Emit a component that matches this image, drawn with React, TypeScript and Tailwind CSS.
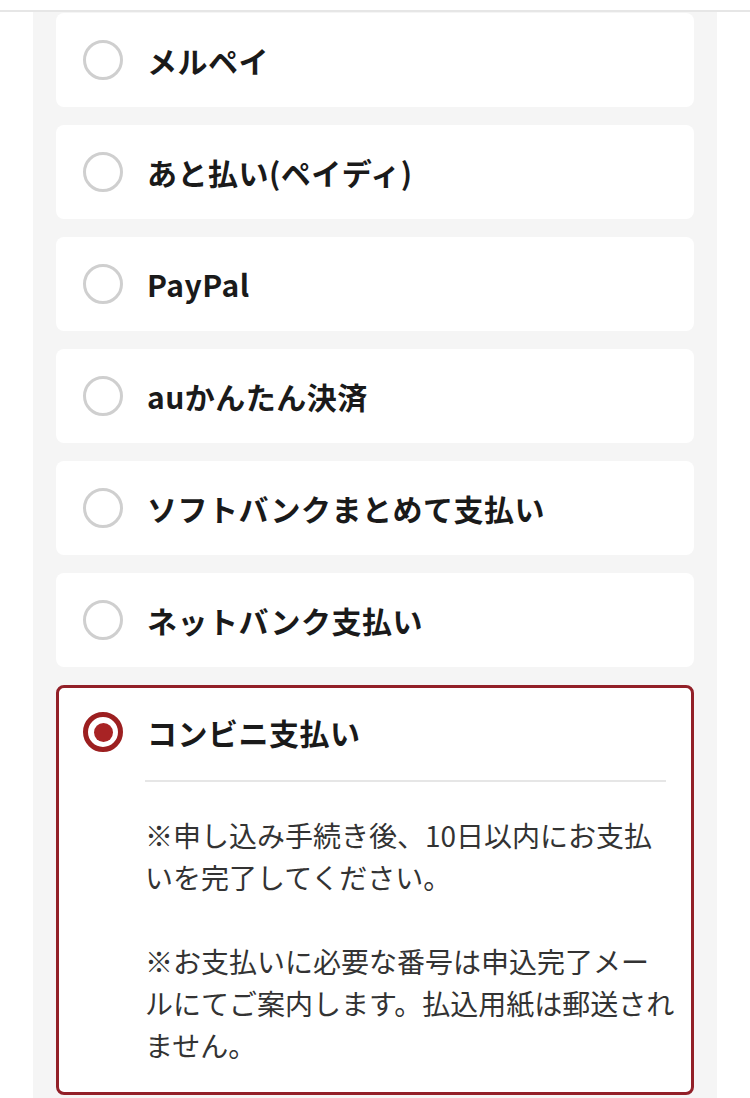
import { useState } from 'react'

const METHODS = [
  'メルペイ',
  'あと払い(ペイディ)',
  'PayPal',
  'auかんたん決済',
  'ソフトバンクまとめて支払い',
  'ネットバンク支払い',
  'コンビニ支払い',
]

// lines are broken by hand, as the source font wraps them
const NOTE_1 = ['※申し込み手続き後、10日以内にお支払', 'いを完了してください。']
const NOTE_2 = ['※お支払いに必要な番号は申込完了メー', 'ルにてご案内します。払込用紙は郵送され', 'ません。']

function Radio({ checked }: { checked: boolean }) {
  if (checked) {
    return (
      <span className="flex h-10 w-10 shrink-0 items-center justify-center rounded-full border-[5px] border-[#9c1f20] bg-white">
        <span className="h-[19px] w-[19px] rounded-full bg-[#a82324]" />
      </span>
    )
  }
  return <span className="h-10 w-10 shrink-0 rounded-full border-[3px] border-[#cfcfcf] bg-white" />
}

export default function App() {
  const [selected, setSelected] = useState('コンビニ支払い')

  return (
    <div
      className="min-h-[1098px] bg-white pt-[10px]"
      style={{ fontFamily: '"Noto Sans CJK JP", "Noto Sans", sans-serif' }}
    >
      <div className="border-t-2 border-[#e6e6e6]">
        <div className="mx-[33px] flex flex-col gap-[18px] bg-[#f5f5f5] px-[23px] pt-[1px] pb-6">
          {METHODS.map((name) => {
            const isSel = name === selected
            return (
              <div
                key={name}
                onClick={() => setSelected(name)}
                className={
                  isSel
                    ? 'cursor-pointer rounded-lg border-[3px] border-[#922028] bg-white pl-[24px] pr-[13px] pb-[26px]'
                    : 'cursor-pointer rounded-lg bg-white pl-[27px] pr-7'
                }
              >
                <div className={isSel ? 'flex h-[88px] items-center gap-[24px]' : 'flex h-[94px] items-center gap-[24px]'}>
                  <Radio checked={isSel} />
                  <span className="text-[30px] font-bold leading-none tracking-[0.5px] text-[#1a1a1a]">{name}</span>
                </div>
                {isSel && (
                  <div className="ml-[62px]">
                    <div className="mt-1 mr-[12px] h-[2px] bg-[#e6e6e6]" />
                    <div className="mt-[32px] flex flex-col gap-[42px] text-[28px] leading-[42px] text-[#333333]">
                      <p>
                        {NOTE_1.map((l) => (
                          <span key={l} className="block whitespace-nowrap">{l}</span>
                        ))}
                      </p>
                      <p>
                        {NOTE_2.map((l) => (
                          <span key={l} className="block whitespace-nowrap">{l}</span>
                        ))}
                      </p>
                    </div>
                  </div>
                )}
              </div>
            )
          })}
        </div>
      </div>
    </div>
  )
}
